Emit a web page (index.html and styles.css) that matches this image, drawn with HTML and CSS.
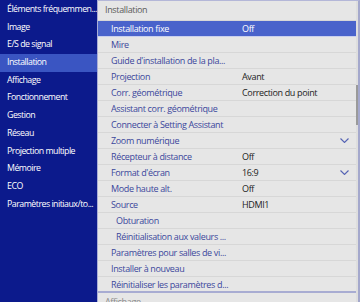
FILE: index.html
```html
<!doctype html>
<html>
<head>
<meta charset="utf-8">
<title>Installation</title>
	<link rel="stylesheet" href="styles.css">
</head>

<body>
	<div class="screen">
		<ul class="side-menu">
			<li>Éléments fréquemmen...</li>
			<li>Image</li>
			<li>E/S de signal</li>
			<li class="active">Installation</li>
			<li>Affichage</li>
			<li>Fonctionnement</li>
			<li>Gestion</li>
			<li>Réseau</li>
			<li>Projection multiple</li>
			<li>Mémoire</li>
			<li>ECO</li>
			<li>Paramètres initiaux/to...</li>
		</ul>
		<div class="panel">
			<div class="panel-list">
				<div class="panel-title">Installation</div>
				<ul class="items">
					<li class="selected"><span class="name">Installation fixe</span><span class="value">Off</span></li>
					<li><span class="name">Mire</span></li>
					<li><span class="name">Guide d'installation de la pla...</span></li>
					<li><span class="name">Projection</span><span class="value">Avant</span></li>
					<li><span class="name">Corr. géométrique</span><span class="value">Correction du point</span></li>
					<li><span class="name">Assistant corr. géométrique</span></li>
					<li><span class="name">Connecter à Setting Assistant</span></li>
					<li class="expand"><span class="name">Zoom numérique</span>
						<svg class="chev" width="9" height="5" viewBox="0 0 9 5"><path d="M0.5 0.5 L4.5 4.5 L8.5 0.5" fill="none" stroke="#5563b4" stroke-width="1.1"/></svg>
					</li>
					<li><span class="name">Récepteur à distance</span><span class="value">Off</span></li>
					<li class="expand"><span class="name">Format d'écran</span><span class="value">16:9</span>
						<svg class="chev" width="9" height="5" viewBox="0 0 9 5"><path d="M0.5 0.5 L4.5 4.5 L8.5 0.5" fill="none" stroke="#5563b4" stroke-width="1.1"/></svg>
					</li>
					<li><span class="name">Mode haute alt.</span><span class="value">Off</span></li>
					<li><span class="name">Source</span><span class="value">HDMI1</span></li>
					<li class="sub"><span class="name">Obturation</span></li>
					<li class="sub"><span class="name">Réinitialisation aux valeurs ...</span></li>
					<li><span class="name">Paramètres pour salles de vi...</span></li>
					<li><span class="name">Installer à nouveau</span></li>
					<li class="last"><span class="name">Réinitialiser les paramètres d...</span></li>
				</ul>
				<div class="next-title">Affichage</div>
			</div>
			<div class="scrollbar">
				<div class="thumb"></div>
			</div>
		</div>
	</div>
</body>
</html>
```

FILE: styles.css
```css
*{box-sizing: border-box;}
body{
	margin: 0;
	background-color: #0c1a8c;
	font-family: "Open Sans", "Noto Sans", sans-serif;
	overflow: hidden;
}
ul{
	list-style-type: none;
	margin: 0;
	padding: 0;
}
.screen{
	display: flex;
	width: 360px;
	height: 302px;
	overflow: hidden;
}
.side-menu{
	width: 97px;
	padding-top: 1px;
	background-color: #0c1a8c;
	color: #fff;
	font-size: 8.8px;
	letter-spacing: -0.5px;
}
.side-menu li{
	height: 17.7px;
	line-height: 17.7px;
	padding-left: 7px;
	white-space: nowrap;
	overflow: hidden;
}
.side-menu li.active{
	background-color: #3a55c2;
}
.panel{
	flex: 1;
	display: flex;
	background-color: #e6e6e6;
	border-left: 1px solid #a9aed6;
	border-right: 2px solid #a4a8cc;
	border-top: 1px solid #b4b7d8;
}
.panel-list{
	flex: 1;
	font-size: 9px;
	letter-spacing: -0.35px;
	color: #3b479c;
}
.panel-title{
	height: 20px;
	line-height: 18px;
	padding-left: 7px;
	color: #5a5a5a;
	border-bottom: 1px solid #d7d7d7;
}
.items li{
	display: flex;
	align-items: center;
	height: 16px;
	padding-left: 13px;
	border-bottom: 1px solid #d7d7d7;
	white-space: nowrap;
}
.items li.sub{
	padding-left: 18px;
}
.items li.last{
	border-bottom: 2px solid #a8acd2;
}
.items li.selected{
	background-color: #4963cb;
	color: #fff;
	border-bottom: 1px solid #c8cfee;
}
.items li.selected .value{
	color: #fff;
}
.name{
	width: 131px;
	overflow: hidden;
}
.value{
	color: #222;
}
.chev{
	margin-left: auto;
	margin-right: 7px;
}
.next-title{
	padding-left: 7px;
	padding-top: 2px;
	color: #8a8a8a;
}
.scrollbar{
	width: 2px;
	background-color: #dedede;
}
.thumb{
	margin-top: 84px;
	height: 40px;
	background-color: #9a9a9a;
}
```
